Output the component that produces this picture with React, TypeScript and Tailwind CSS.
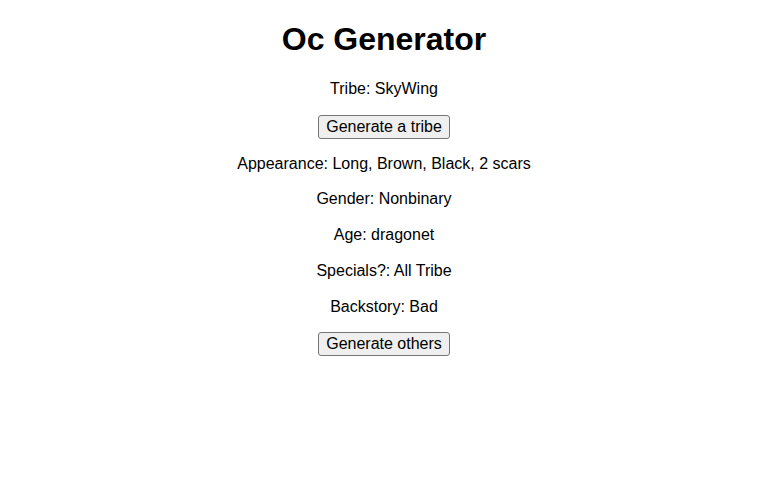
import { useState } from "react";

const tribes = ["SkyWing", "MudWing", "SandWing", "SeaWing", "RainWing", "IceWing", "NightWing"];

export default function App() {
  const [tribe, setTribe] = useState("SkyWing");
  const [others, setOthers] = useState({
    appearance: "Long, Brown, Black, 2 scars",
    gender: "Nonbinary",
    age: "dragonet",
    specials: "All Tribe",
    backstory: "Bad",
  });

  const rows: [string, string][] = [
    ["Appearance", others.appearance],
    ["Gender", others.gender],
    ["Age", others.age],
    ["Specials?", others.specials],
    ["Backstory", others.backstory],
  ];

  const btn =
    "inline-block bg-[#efefef] hover:bg-[#e5e5e5] border border-[#767676] rounded-[3px] px-[7px] py-[2px] text-[16px] leading-[18px] text-black";

  return (
    <div className="min-h-screen bg-white text-center text-black font-['Liberation_Sans',Arial,sans-serif] pt-[21px]">
      <h1 className="text-[32px] font-bold leading-[37px] mb-[22px]">Oc Generator</h1>

      <p className="text-[16px] leading-[18px] mb-[17px]">Tribe: {tribe}</p>
      <div className="mb-[16px]">
        <button
          className={btn}
          onClick={() => setTribe(tribes[Math.floor(Math.random() * tribes.length)])}
        >
          Generate a tribe
        </button>
      </div>

      {rows.map(([label, value], i) => (
        <p
          key={label}
          className={i === 0 ? "text-[16px] leading-[18px] mb-[17px]" : "text-[16px] leading-[18px] mb-[18px]"}
        >
          {label}: {value}
        </p>
      ))}

      <div className="-mt-[2px]">
        <button className={btn} onClick={() => setOthers({ ...others })}>
          Generate others
        </button>
      </div>
    </div>
  );
}
